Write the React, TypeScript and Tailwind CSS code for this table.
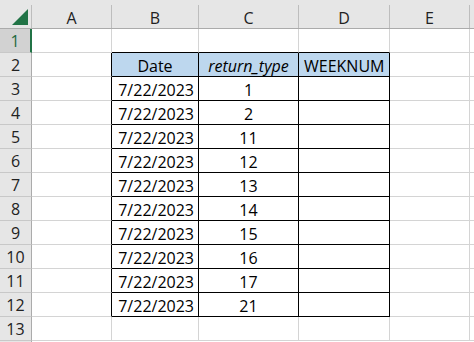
import React from "react";

const dates = ["1", "2", "11", "12", "13", "14", "15", "16", "17", "21"];

const colW = ["w-[80px]", "w-[87px]", "w-[100px]", "w-[91px]", "w-[80px]"];
const headW = ["w-[79px]", "w-[86px]", "w-[99px]", "w-[90px]", "w-[79px]"];
const letters = ["A", "B", "C", "D", "E"];

function HeaderRow() {
  return (
    <div className="flex h-[29px] border-b border-[#ababab] bg-[#e6e6e6]">
      <div className="flex w-[32px] shrink-0">
        <div className="w-[31px]">
          <svg width="16" height="16" viewBox="0 0 16 16" className="ml-[12px] mt-[9px]">
            <polygon points="16,0 16,16 0,16" fill="#217346" />
          </svg>
        </div>
        <div className="mt-[5px] h-[23px] w-px bg-[#bdbdbd]" />
      </div>
      {letters.map((l, i) => (
        <div key={l} className="flex shrink-0">
          <div className={`${headW[i]} flex items-center justify-center pt-[7px] text-[#222]`}>{l}</div>
          <div className="mt-[5px] h-[23px] w-px bg-[#bdbdbd]" />
        </div>
      ))}
      <div className="flex-1" />
    </div>
  );
}

function RowHead({ n, active }: { n: number; active?: boolean }) {
  return (
    <div
      className={
        active
          ? "flex w-[32px] shrink-0 items-center justify-center border-r-2 border-b border-r-[#217346] border-b-[#c8c8c8] bg-[#d2d2d2] text-[#1e6b40]"
          : "flex w-[32px] shrink-0 items-center justify-center border-r border-b border-r-[#ababab] border-b-[#c8c8c8] bg-[#e6e6e6] text-[#222]"
      }
    >
      {n}
    </div>
  );
}

function Cell({
  w,
  right,
  bottom,
  className,
  children,
}: {
  w: string;
  right?: boolean;
  bottom?: boolean;
  className?: string;
  children?: React.ReactNode;
}) {
  return (
    <div
      className={`${w} flex shrink-0 items-center overflow-hidden whitespace-nowrap border-r border-b pt-[2px] ${
        right ? "border-r-black" : "border-r-[#d4d4d4]"
      } ${bottom ? "border-b-black" : "border-b-[#d4d4d4]"} ${className ?? ""}`}
    >
      {children}
    </div>
  );
}

function Rest() {
  return <div className="flex-1 border-b border-[#d4d4d4]" />;
}

export default function App() {
  return (
    <div
      className="h-[342px] w-[474px] overflow-hidden bg-white text-[16px] leading-none text-black"
      style={{ fontFamily: '"Open Sans", "Liberation Sans", sans-serif' }}
    >
      <HeaderRow />
      <div className="flex h-[24px]">
        <RowHead n={1} active />
        <Cell w={colW[0]} />
        <Cell w={colW[1]} bottom />
        <Cell w={colW[2]} bottom />
        <Cell w={colW[3]} bottom />
        <Cell w={colW[4]} />
        <Rest />
      </div>
      <div className="flex h-[24px]">
        <RowHead n={2} />
        <Cell w={colW[0]} right />
        <Cell w={colW[1]} right bottom className="justify-center bg-[#bdd7ee]">
          Date
        </Cell>
        <Cell w={colW[2]} right bottom className="justify-center bg-[#bdd7ee] italic">
          return_type
        </Cell>
        <Cell w={colW[3]} right bottom className="bg-[#bdd7ee] pl-[5px]">
          WEEKNUM
        </Cell>
        <Cell w={colW[4]} />
        <Rest />
      </div>
      {dates.map((d, i) => (
        <div key={i} className="flex h-[24px]">
          <RowHead n={i + 3} />
          <Cell w={colW[0]} right />
          <Cell w={colW[1]} right bottom className="justify-end pr-[4px]">
            7/22/2023
          </Cell>
          <Cell w={colW[2]} right bottom className="justify-center">
            {d}
          </Cell>
          <Cell w={colW[3]} right bottom />
          <Cell w={colW[4]} />
          <Rest />
        </div>
      ))}
      <div className="flex h-[24px]">
        <RowHead n={13} />
        <Cell w={colW[0]} />
        <Cell w={colW[1]} />
        <Cell w={colW[2]} />
        <Cell w={colW[3]} />
        <Cell w={colW[4]} />
        <Rest />
      </div>
      <div className="flex h-[24px]">
        <div className="w-[32px] shrink-0 border-r border-[#ababab] bg-[#e6e6e6]" />
        <div className="flex-1" />
      </div>
    </div>
  );
}
